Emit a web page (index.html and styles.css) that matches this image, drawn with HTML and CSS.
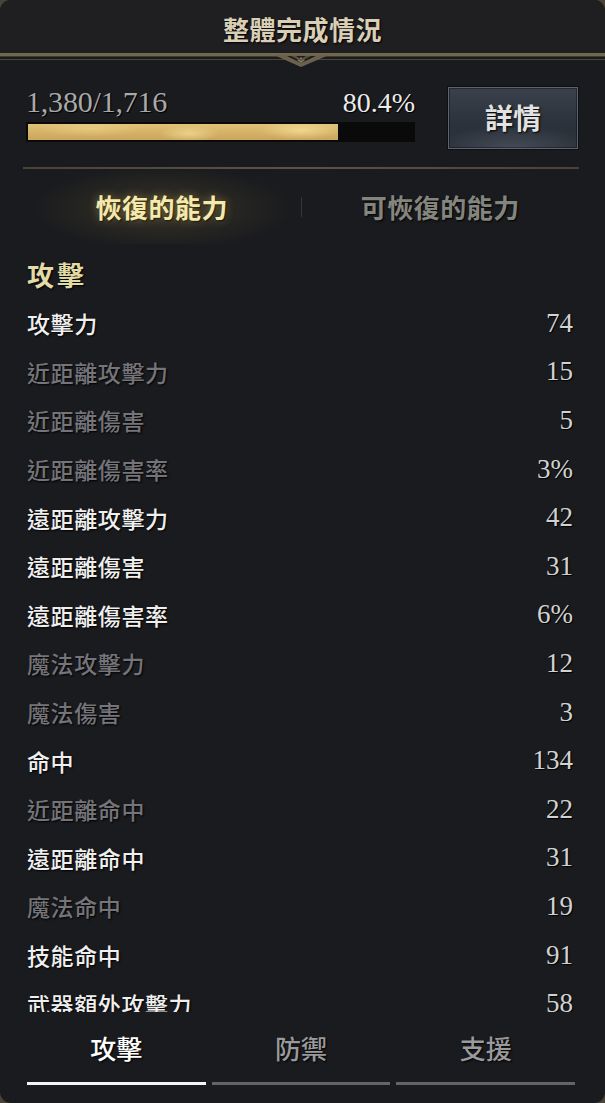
FILE: index.html
```html
<!DOCTYPE html>
<html lang="zh-Hant">
<head>
<meta charset="utf-8">
<title>整體完成情況</title>
<link rel="stylesheet" href="styles.css">
</head>
<body>
<div class="panel">
  <header class="header">
    <h1 class="title">整體完成情況</h1>
  </header>
  <svg class="header-rule" width="605" height="16" viewBox="0 0 605 16" aria-hidden="true">
    <rect x="0" y="0" width="605" height="3" fill="#70684f"/>
    <rect x="0" y="3" width="605" height="1" fill="#3f3a2d"/>
    <rect x="0" y="6" width="605" height="1" fill="#4c4636"/>
    <path d="M274 2 L329 2 L301 14 Z" fill="#6a624c"/>
    <path d="M287 3 L316 3 L301 10 Z" fill="#1d1d1f"/>
    <path d="M301 4 L305 7 L301 10 L297 7 Z" fill="#857b62"/>
    <path d="M291 3 L296 3 L301 6 L306 3 L311 3 L301 8 Z" fill="#5a5342"/>
  </svg>

  <section class="progress">
    <div class="progress-main">
      <div class="progress-text">
        <span class="count">1,380/1,716</span>
        <span class="percent">80.4%</span>
      </div>
      <div class="bar"><div class="bar-fill" style="width: 80.4%"></div></div>
    </div>
    <button class="detail-btn">詳情</button>
  </section>

  <div class="divider"></div>

  <nav class="tabs">
    <div class="tab tab-active">恢復的能力</div>
    <div class="tab-sep"></div>
    <div class="tab">可恢復的能力</div>
  </nav>

  <h2 class="section-title">攻擊</h2>

  <div class="list">
    <div class="row on"><span class="label">攻擊力</span><span class="value">74</span></div>
    <div class="row off"><span class="label">近距離攻擊力</span><span class="value">15</span></div>
    <div class="row off"><span class="label">近距離傷害</span><span class="value">5</span></div>
    <div class="row off"><span class="label">近距離傷害率</span><span class="value">3%</span></div>
    <div class="row on"><span class="label">遠距離攻擊力</span><span class="value">42</span></div>
    <div class="row on"><span class="label">遠距離傷害</span><span class="value">31</span></div>
    <div class="row on"><span class="label">遠距離傷害率</span><span class="value">6%</span></div>
    <div class="row off"><span class="label">魔法攻擊力</span><span class="value">12</span></div>
    <div class="row off"><span class="label">魔法傷害</span><span class="value">3</span></div>
    <div class="row on"><span class="label">命中</span><span class="value">134</span></div>
    <div class="row off"><span class="label">近距離命中</span><span class="value">22</span></div>
    <div class="row on"><span class="label">遠距離命中</span><span class="value">31</span></div>
    <div class="row off"><span class="label">魔法命中</span><span class="value">19</span></div>
    <div class="row on"><span class="label">技能命中</span><span class="value">91</span></div>
    <div class="row on"><span class="label">武器額外攻擊力</span><span class="value">58</span></div>
  </div>

  <nav class="bottom-tabs">
    <div class="btab btab-active">攻擊</div>
    <div class="btab">防禦</div>
    <div class="btab">支援</div>
  </nav>
</div>
</body>
</html>
```

FILE: styles.css
```css
* { box-sizing: border-box; }

html, body {
  margin: 0;
  padding: 0;
}

body {
  width: 605px;
  height: 1103px;
  background: #4a4438;
  overflow: hidden;
  font-family: "Noto Sans CJK TC", "Noto Sans", sans-serif;
}

.panel {
  width: 605px;
  height: 1103px;
  background: #1a1b1e;
  border-radius: 11px;
  overflow: hidden;
  display: flex;
  flex-direction: column;
}

.header {
  height: 53px;
  background: #1f1f22;
  padding-top: 5px;
  flex: none;
}

.title {
  margin: 0;
  text-align: center;
  font-size: 26px;
  font-weight: 700;
  line-height: 47px;
  color: #d9cfb6;
  letter-spacing: 0.5px;
  text-shadow: 1px 1px 2px #000;
}

.header-rule {
  display: block;
  flex: none;
}

.progress {
  display: flex;
  align-items: flex-start;
  padding: 18px 0 0 26px;
  height: 98px;
  flex: none;
}

.progress-main {
  width: 389px;
}

.progress-text {
  display: flex;
  justify-content: space-between;
  align-items: baseline;
  font-family: "Liberation Serif", serif;
  font-size: 30px;
  line-height: 30px;
  text-shadow: 1px 1px 1px #000;
}

.count {
  color: #a9a9a9;
  letter-spacing: -0.2px;
}

.percent {
  color: #ebebeb;
  font-size: 28px;
}

.bar {
  margin-top: 4px;
  height: 20px;
  background: #0a0a0b;
  padding: 2px;
}

.bar-fill {
  height: 100%;
  background:
    radial-gradient(ellipse 30px 8px at 52% 60%, rgba(255, 236, 170, 0.55), rgba(255, 236, 170, 0) 100%),
    radial-gradient(ellipse 40px 9px at 88% 40%, rgba(255, 236, 170, 0.6), rgba(255, 236, 170, 0) 100%),
    radial-gradient(ellipse 50px 8px at 20% 30%, rgba(255, 230, 160, 0.35), rgba(255, 230, 160, 0) 100%),
    linear-gradient(180deg, #e2c27a 0%, #d4b166 55%, #c9a65c 100%);
}

.detail-btn {
  margin-left: 33px;
  width: 130px;
  height: 62px;
  border: 1px solid #5b6470;
  background:
    radial-gradient(ellipse 80px 22px at 50% 100%, rgba(120, 128, 140, 0.35), rgba(120, 128, 140, 0) 100%),
    linear-gradient(180deg, #3a414c 0%, #2c323b 60%, #2a3038 100%);
  box-shadow: inset 0 0 0 1px rgba(0, 0, 0, 0.35), 0 0 0 1px #0e0f11;
  font-family: "Noto Sans CJK TC", sans-serif;
  font-size: 28px;
  font-weight: 700;
  color: #e2e2e2;
  text-shadow: 1px 1px 2px #000;
  padding: 0 0 2px 0;
  cursor: pointer;
}

.divider {
  margin: 0 26px 0 23px;
  height: 2px;
  flex: none;
  background: linear-gradient(90deg, #4a4438, #5a5446 50%, #4a4438);
}

.tabs {
  display: flex;
  align-items: center;
  height: 76px;
  padding: 0 26px 0 23px;
  flex: none;
}

.tab {
  flex: 1;
  text-align: center;
  font-size: 26px;
  font-weight: 700;
  line-height: 74px;
  color: #85857f;
  letter-spacing: 0.5px;
  text-shadow: 1px 1px 2px #000;
}

.tab-active {
  color: #f5e9ae;
  background: radial-gradient(ellipse 130px 42px at 50% 52%, rgba(170, 150, 80, 0.2), rgba(170, 150, 80, 0) 100%);
  text-shadow: 0 0 8px rgba(210, 180, 90, 0.5), 1px 1px 2px #000;
}

.tab-sep {
  width: 1px;
  height: 20px;
  background: #35353a;
  flex: none;
}

.section-title {
  margin: 12px 0 0 27px;
  font-size: 27px;
  font-weight: 700;
  line-height: 36px;
  letter-spacing: 3px;
  color: #e3dba6;
  text-shadow: 1px 1px 2px #000;
  flex: none;
}

.list {
  margin-top: 6px;
  height: 713px;
  overflow: hidden;
  flex: none;
}

.row {
  display: flex;
  justify-content: space-between;
  align-items: center;
  height: 48.6px;
  padding: 0 32px 0 27px;
}

.label {
  font-size: 23px;
  font-weight: 500;
  letter-spacing: 0.6px;
  text-shadow: 1px 1px 2px #000;
}

.row.on .label { color: #efefef; }
.row.off .label { color: #74747a; }

.value {
  font-family: "Liberation Serif", serif;
  font-size: 27px;
  color: #d2d2d2;
  text-shadow: 1px 1px 1px #000;
}

.bottom-tabs {
  display: flex;
  gap: 6px;
  padding: 16px 30px 0 27px;
  flex: none;
}

.btab {
  flex: 1;
  text-align: center;
  font-size: 26px;
  font-weight: 500;
  line-height: 40px;
  color: #9a9a9c;
  padding-bottom: 14px;
  border-bottom: 3px solid #646466;
  text-shadow: 1px 1px 2px #000;
}

.btab-active {
  color: #ffffff;
  border-bottom-color: #f4f4f4;
}
```
